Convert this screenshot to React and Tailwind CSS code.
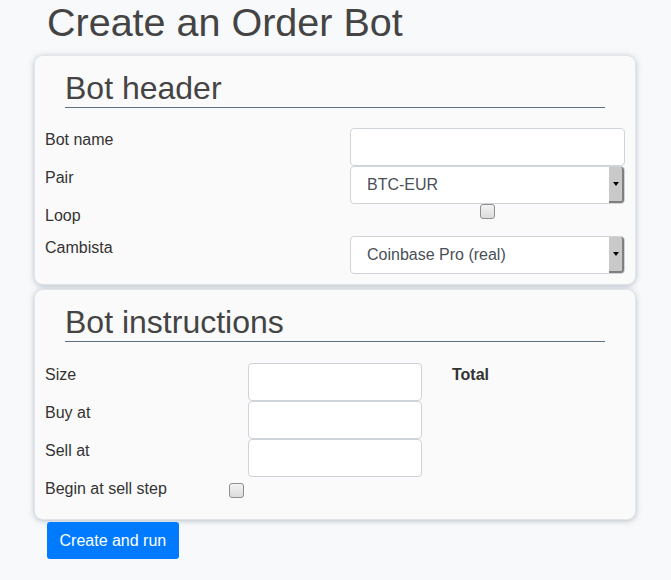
import React from "react";

const font = { fontFamily: '"Liberation Sans", Arial, sans-serif' };

function TextInput({ className = "" }) {
  return (
    <input
      type="text"
      className={`h-[38px] rounded-[4px] border border-[#ced4da] bg-white px-3 text-base text-[#495057] outline-none ${className}`}
    />
  );
}

function FakeSelect({ value }) {
  return (
    <div className="flex h-[38px] w-full items-stretch rounded-[4px] border border-[#ced4da] bg-white">
      <div className="flex flex-1 items-center pl-4 text-base text-[#495057]">
        {value}
      </div>
      <div className="flex w-[15px] items-center justify-center rounded-r-[3px] border-r-2 border-b-2 border-[#7f7f7f] bg-[#c9c9c9]">
        <div className="h-0 w-0 border-x-[3px] border-t-[4px] border-x-transparent border-t-black" />
      </div>
    </div>
  );
}

function Checkbox() {
  return (
    <div className="h-[15px] w-[15px] rounded-[3px] border border-[#8f8f8f] bg-gradient-to-b from-[#f2f2f2] to-[#dcdcdc]" />
  );
}

function Card({ title, children }) {
  return (
    <div className="rounded-[8px] bg-[#fafafa] px-[10px] pt-[14px] pb-[10px] shadow-[0_0_0_1px_#e2e6ea,0_1px_6px_rgba(80,100,125,0.5)]">
      <h2 className="mx-[20px] border-b border-[#5d7185] text-[32px] leading-[37px] text-[#444]">
        {title}
      </h2>
      {children}
    </div>
  );
}

export default function App() {
  return (
    <div
      className="min-h-[580px] w-full bg-[#f8f9fa] pl-[35px] pr-[36px] text-[#333]"
      style={font}
    >
      <h1 className="pl-3 text-[39.5px] leading-[44px] text-[#444]">
        Create an Order Bot
      </h1>

      <div className="mt-[12px] flex flex-col gap-[6px]">
        <Card title="Bot header">
          <div className="mt-[20px] flex flex-col">
            <div className="flex">
              <div className="w-[305px] text-base leading-6">Bot name</div>
              <TextInput className="flex-1" />
            </div>
            <div className="flex">
              <div className="w-[305px] text-base leading-6">Pair</div>
              <div className="flex-1">
                <FakeSelect value="BTC-EUR" />
              </div>
            </div>
            <div className="flex">
              <div className="mb-2 w-[305px] text-base leading-6">Loop</div>
              <div className="flex flex-1 justify-center">
                <Checkbox />
              </div>
            </div>
            <div className="flex">
              <div className="w-[305px] text-base leading-6">Cambista</div>
              <div className="flex-1">
                <FakeSelect value="Coinbase Pro (real)" />
              </div>
            </div>
          </div>
        </Card>

        <Card title="Bot instructions">
          <div className="mt-[21px] flex">
            <div className="flex flex-col">
              <div className="flex">
                <div className="w-[203px] text-base leading-6">Size</div>
                <TextInput className="w-[174px]" />
              </div>
              <div className="flex">
                <div className="w-[203px] text-base leading-6">Buy at</div>
                <TextInput className="w-[174px]" />
              </div>
              <div className="flex">
                <div className="w-[203px] text-base leading-6">Sell at</div>
                <TextInput className="w-[174px]" />
              </div>
              <div className="flex">
                <div className="mb-2 w-[184px] text-base leading-6">
                  Begin at sell step
                </div>
                <div className="pt-[6px]">
                  <Checkbox />
                </div>
              </div>
            </div>
            <div className="ml-[30px] text-base font-bold leading-6">Total</div>
          </div>
        </Card>
      </div>

      <button
        type="button"
        className="mt-[3px] ml-3 h-[37px] rounded-[3px] bg-[#007bff] px-[12.5px] text-base text-white"
      >
        Create and run
      </button>
    </div>
  );
}
